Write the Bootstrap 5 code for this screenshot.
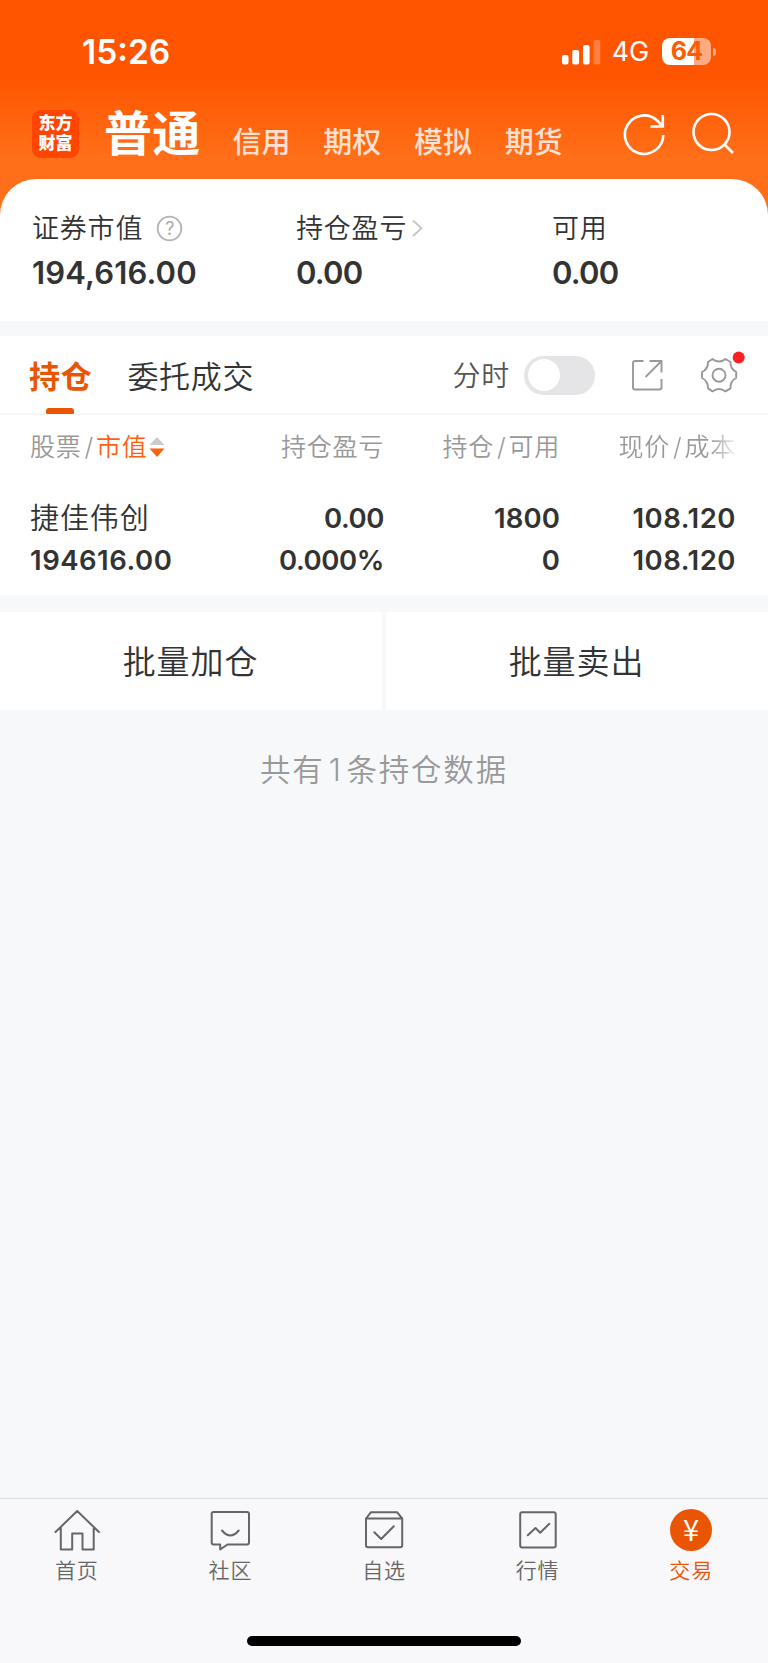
<!DOCTYPE html>
<html lang="zh-CN">
<head>
<meta charset="utf-8">
<meta name="viewport" content="width=device-width, initial-scale=1">
<title>普通交易 - 持仓</title>
<link rel="stylesheet" href="https://cdn.jsdelivr.net/npm/bootstrap@5.3.0/dist/css/bootstrap.min.css">
<style>
  body { font-family: Inter, "Noto Sans CJK SC", sans-serif; background: #f7f8fa; color: #333; font-weight: 350; }
  svg { display: block; flex: none; overflow: visible; }
  .screen { width: 768px; height: 1663px; overflow: hidden; }
  .top-area { height: 230px; background: linear-gradient(#ff5500 0, #ff5500 76px, #ff6e18 156px, #ff6e18 100%); color: #fff; }
  .status { height: 100px; padding: 4px 52px 0 82px; }
  .clock { font-size: 33.5px; font-weight: 600; letter-spacing: 0; }
  .net { font-size: 27px; font-weight: 400; letter-spacing: -.2px; margin: 0 13px 0 12px; }
  .battery { width: 49px; height: 27px; margin-top: -1px; border-radius: 8px; background: linear-gradient(90deg, #fff 65%, rgba(255,255,255,.5) 65%); color: #ff5a06; font-size: 25px; font-weight: 700; line-height: 27px; letter-spacing: -.8px; }
  .nub { width: 3px; height: 8px; margin-left: 2px; border-radius: 0 4px 4px 0; background: rgba(255,255,255,.5); }
  .switcher { height: 79px; padding-left: 32px; }
  .brand { width: 47px; height: 48px; margin-top: 10px; border-radius: 9px; background: #ff4500; font-size: 17px; font-weight: 900; line-height: 19.5px; padding-top: 4px; }
  .acct-main { font-size: 48px; font-weight: 700; line-height: 60px; margin: 4px 0 0 25px; letter-spacing: .3px; }
  .acct { font-size: 29px; line-height: 40px; font-weight: 500; color: #ffe1d2; width: 90.7px; margin-top: 23px; }
  .summary { height: 142px; margin-top: -51px; border-radius: 36px 36px 0 0; padding: 28px 0 0 32px; }
  .lbl { font-size: 27px; line-height: 44px; letter-spacing: .8px; height: 44px; }
  .lbl svg { margin-top: -3px; }
  .amt { font-size: 31px; font-weight: 600; line-height: 44px; letter-spacing: -.8px; }
  .amt.total { letter-spacing: .15px; }
  .gap-band { height: 15px; }
  .tabs { height: 79px; border-bottom: 2px solid #f5f6f7; padding: 0 30px 0 29px; }
  .tab-link { font-size: 31px; line-height: 77px; letter-spacing: .7px; padding-top: 2px; height: 77px; }
  .tab-on { font-weight: 700; color: #ea5504; position: relative; }
  .tab-on::after { content: ""; position: absolute; left: 17px; bottom: -1px; width: 28px; height: 6px; border-radius: 3px 3px 1px 1px; background: #ea5504; }
  .toggle { width: 71px; height: 39px; margin-top: 1px; border-radius: 20px; background: #e5e5e7; padding: 3.5px; }
  .knob { width: 32px; height: 32px; border-radius: 50%; background: #fff; }
  .tabs svg { margin-top: 1px; }
  .holdings { height: 180px; padding: 2px 32px 0 30px; }
  .cols { display: grid; grid-template-columns: 177px 177px 176px 176px; }
  .cols > * + * { text-align: right; }
  .thead-row { font-size: 25px; color: #999; line-height: 60px; letter-spacing: .75px; }
  .sl { margin: 0 2px 0 3px; }
  .fade-out { background: linear-gradient(90deg, #999 78%, #f2f2f2 100%); -webkit-background-clip: text; background-clip: text; color: transparent; }
  .val { font-size: 27.5px; font-weight: 600; line-height: 42px; letter-spacing: .1px; }
  .val .tight { letter-spacing: -.4px; }
  .val .wide { letter-spacing: .5px; }
  .val.first-line { margin-top: 20px; }
  .val .stock { font-size: 29px; font-weight: 350; letter-spacing: .9px; padding-top: 1px; height: 42px; }
  .batch { height: 98px; margin-top: 17px; gap: 4px; }
  .batch > div { font-size: 33px; letter-spacing: .9px; line-height: 100px; padding-right: 1px; }
  .count { font-size: 30.5px; letter-spacing: 1.8px; line-height: 46px; color: #999; margin-top: 37px; }
  .tabbar { height: 165px; border-top: 1px solid #dcdde0; background: #f8f8fb; color: #666; }
  .tabbar .item { font-size: 21px; line-height: 30px; letter-spacing: .8px; padding-top: 7px; }
  .tabbar .item span { margin-top: 2px; }
  .tabbar .active-item { color: #ea5504; }
  .tabbar svg { fill: none; stroke: #666; stroke-width: 2; stroke-linejoin: round; stroke-linecap: round; }
  .home-bar { width: 274px; height: 10px; border-radius: 5px; background: #000; margin-bottom: 17px; }
</style>
</head>
<body>
<div class="screen d-flex flex-column">
  <header class="top-area flex-shrink-0">
    <div class="status d-flex align-items-center">
      <div class="clock me-auto">15:26</div>
      <svg width="38" height="25" fill="#fff"><rect y="15" width="6.5" height="9.5" rx="2"/><rect x="10.3" y="10" width="6.8" height="14.5" rx="2"/><rect x="21" y="5" width="6.6" height="19.5" rx="2"/><rect x="31.5" width="6.8" height="24.5" rx="2" opacity=".25"/></svg>
      <div class="net">4G</div>
      <div class="battery text-center">64</div>
      <div class="nub"></div>
    </div>
    <div class="switcher d-flex align-items-start">
      <div class="brand text-center">东方<br>财富</div>
      <div class="acct-main">普通</div>
      <div class="d-flex" style="margin-left:32px">
        <div class="acct">信用</div><div class="acct">期权</div><div class="acct">模拟</div><div class="acct">期货</div>
      </div>
      <svg class="ms-auto" width="144" height="60" fill="none" stroke="#fff" stroke-width="2.6"><path d="M39.300 35A19.200 19.200 0 1 1 33.600 21L38.500 26M38.800 15V26.500H26.500"/><circle cx="87.5" cy="32" r="18"/><path d="M100.5 44.5L109 53"/></svg>
    </div>
  </header>

  <section class="summary bg-white d-flex flex-shrink-0">
    <div style="width:264px">
      <div class="lbl d-flex align-items-center">证券市值
        <svg class="ms-2" width="32" height="26"><circle cx="18.500" cy="13.500" r="11.800" fill="none" stroke="#b3b3b3" stroke-width="1.8"/><text x="18.800" y="20" text-anchor="middle" font-size="18" fill="#aaa" letter-spacing="0" font-weight="400">?</text></svg>
      </div>
      <div class="amt total">194,616.00</div>
    </div>
    <div style="width:256px">
      <div class="lbl d-flex align-items-center">持仓盈亏
        <svg width="14" height="20" fill="none" stroke="#c4c4c4" stroke-width="1.8"><path d="M6 2.500L14.500 10.200L6 18"/></svg>
      </div>
      <div class="amt">0.00</div>
    </div>
    <div>
      <div class="lbl">可用</div>
      <div class="amt">0.00</div>
    </div>
  </section>
  <div class="gap-band flex-shrink-0"></div>

  <nav class="tabs bg-white d-flex align-items-center flex-shrink-0">
    <div class="tab-link tab-on">持仓</div>
    <div class="tab-link" style="margin-left:35px">委托成交</div>
    <div class="ms-auto" style="font-size:28px;letter-spacing:.8px;color:#555;margin-right:14px;padding-top:3px">分时</div>
    <div class="toggle"><div class="knob"></div></div>
    <svg style="margin-left:36px" width="32" height="32" fill="none" stroke="#999" stroke-width="1.9"><path d="M12.500 2H4Q2 2 2 4V28.500Q2 30.500 4 30.500H28.500Q30.500 30.500 30.500 28.500V20M18.500 2H30.500V13.500M30 2.500L14.500 18"/></svg>
    <svg style="margin-left:37px" width="38" height="40" fill="none" stroke="#999" stroke-width="1.9" stroke-linejoin="round"><path d="M8 7L12.500 4Q19 9.200 25.500 4L30.500 7Q30 13.800 36.200 17V23Q30 26 30.500 33.400L25.500 36.400Q19 31.400 12.500 36.400L8 33.400Q8.200 26 2 23V17Q8.200 14 8 7Z"/><circle cx="19" cy="20.200" r="6.500"/><circle cx="38.700" cy="2.500" r="6" fill="#f92323" stroke="none"/></svg>
  </nav>

  <section class="holdings bg-white flex-shrink-0">
    <div class="cols thead-row">
      <div class="d-flex align-items-center">股票<span class="sl">/</span><span style="color:#ff5f0f">市值</span>
        <svg width="18" height="22"><path d="M1.500 9L9 1L16.500 9Z" fill="#ccc"/><path d="M1.500 12.500H16.500L9 21Z" fill="#ff5f0f"/></svg>
      </div>
      <div>持仓盈亏</div>
      <div>持仓<span class="sl">/</span>可用</div>
      <div><span class="fade-out">现价<span class="sl">/</span>成本</span></div>
    </div>
    <div class="cols val first-line"><div class="stock">捷佳伟创</div><div class="tight">0.00</div><div>1800</div><div class="wide">108.120</div></div>
    <div class="cols val"><div class="wide">194616.00</div><div class="tight">0.000%</div><div>0</div><div class="wide">108.120</div></div>
  </section>

  <section class="batch d-flex text-center flex-shrink-0">
    <div class="bg-white flex-fill">批量加仓</div>
    <div class="bg-white flex-fill">批量卖出</div>
  </section>
  <div class="count text-center">共有<span class="mx-1">1</span>条持仓数据</div>

  <footer class="tabbar mt-auto d-flex flex-column flex-shrink-0">
    <div class="row g-0 text-center">
      <div class="item col d-flex flex-column align-items-center"><svg width="48" height="48"><path d="M2.500 26L24.200 5L45.900 26M7.800 22V43.500H19.200V27.500H29.500V43.500H40.700V22"/></svg><span>首页</span></div>
      <div class="item col d-flex flex-column align-items-center"><svg width="48" height="48"><path d="M7.500 6H41Q43 6 43 8V36.500Q43 38.500 41 38.500H21.500L14.200 43.500V38.500H7.500Q5.700 38.500 5.700 36.500V8Q5.700 6 7.500 6ZM16 24.500Q24.300 34.500 32.700 24.500"/></svg><span>社区</span></div>
      <div class="item col d-flex flex-column align-items-center"><svg width="48" height="48"><path d="M6 12.500L11 6.200H37L42.200 12.500V39.500Q42.200 41.300 40.200 41.300H8Q6 41.300 6 39.500ZM6 12.500H42.200M14.300 26.200L21.200 33L33.800 20.200"/></svg><span>自选</span></div>
      <div class="item col d-flex flex-column align-items-center"><svg width="48" height="48"><rect x="6.200" y="6.200" width="35.500" height="35.200" rx="2"/><path d="M13.800 29.300L21.500 22L26.200 26.800L35.300 17.800"/></svg><span>行情</span></div>
      <div class="item col d-flex flex-column align-items-center active-item"><svg width="48" height="48"><circle cx="24" cy="24" r="21" fill="#ea5504" stroke="none"/><text x="24" y="34.500" text-anchor="middle" font-family="Noto Sans CJK SC" font-weight="400" font-size="29" letter-spacing="0" fill="#fff" stroke="none">¥</text></svg><span>交易</span></div>
    </div>
    <div class="home-bar mt-auto mx-auto"></div>
  </footer>
</div>
<script src="https://cdn.jsdelivr.net/npm/bootstrap@5.3.0/dist/js/bootstrap.bundle.min.js"></script>
</body>
</html>
